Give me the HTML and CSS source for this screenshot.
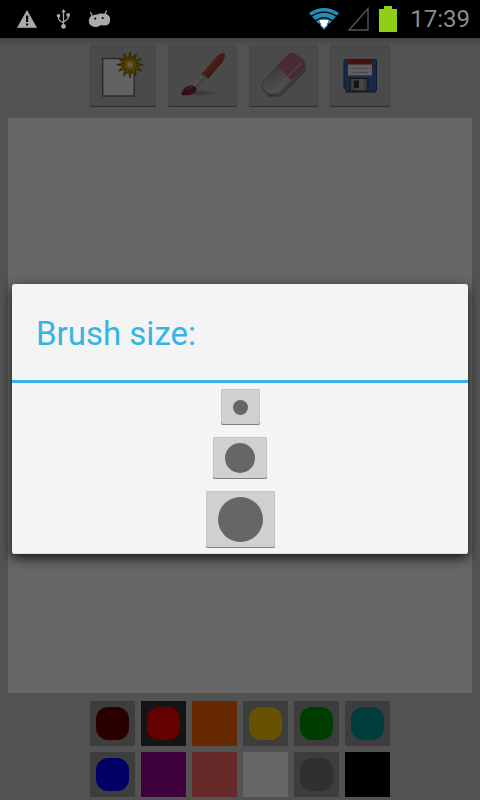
FILE: index.html
```
<!DOCTYPE html>
<html lang="en">
<head>
    <meta charset="UTF-8">
    <meta name="viewport" content="width=device-width, initial-scale=1.0">
    <title>Drawing</title>
    <link rel="stylesheet" href="styles.css">
</head>
<body>

    <header class="status-bar">
        <div class="status-left">
            <svg width="20" height="18" viewBox="0 0 20 18">
                <path d="M10 0.5L19.6 17.6H0.4Z" fill="#aaa" stroke="#aaa" stroke-width="0.6" stroke-linejoin="round"/>
                <path d="M9 5.5h2.2v6.5H9zM9 13.4h2.2v2.2H9z" fill="#000"/>
            </svg>
            <svg width="14" height="20" viewBox="0 0 14 20" fill="#aaa">
                <path d="M7.500 2v16M2.500 6v3q0 2 2 3l3 2M12.300 5v3q0 2-2 3l-2.800 2" fill="none" stroke="#aaa" stroke-width="1.300"/>
                <path d="M7.500 0L9.700 3.200H5.300Z"/>
                <circle cx="7.500" cy="17.400" r="2.400"/>
                <circle cx="2.500" cy="6.800" r="1.800"/>
                <path d="M10.500 4.300h3.400v3.200h-3.400z"/>
            </svg>
            <svg width="22" height="18" viewBox="0 0 22 18">
                <path d="M1.500 2.500l2 4M17.500 1l-2 4" stroke="#aaa" stroke-width="1.300" stroke-linecap="round"/>
                <path d="M0.500 8C3 4.500 7 5 10 3.800C14 2.800 19 3.500 20.800 7C22 12 20 15.500 15.500 15.500C13 15.500 12 15 11 15.500C8.500 17.700 3 17.500 1 14.500C-0.500 12.500-0.500 10 0.500 8Z" fill="#aaa"/>
                <circle cx="6.300" cy="8.600" r="1.100" fill="#000"/>
                <circle cx="13.700" cy="8" r="1.100" fill="#000"/>
            </svg>
        </div>
        <div class="status-right">
            <svg width="30" height="24" viewBox="0 0 30 24">
                <path d="M16 23L1 6Q16-4 31 6Z" fill="#268cb3"/>
                <path d="M3.500 9.200Q16 1 28.500 9.200M7.500 13.700Q16 7.500 24.500 13.700M11 17.500Q16 14 21 17.500" fill="none" stroke="#000" stroke-width="1.400"/>
                <path d="M11.500 13h9l-1.500 5-3 3-3-3z" fill="#fff"/>
            </svg>
            <svg width="21" height="24" viewBox="0 0 21 24">
                <path d="M20 1.500V23H1Z" fill="none" stroke="#555" stroke-width="1.400"/>
            </svg>
            <svg width="18" height="26" viewBox="0 0 18 26">
                <path d="M5 0h8v3h5v23H0V3h5z" fill="#8fcf16"/>
            </svg>
            <time class="clock">17:39</time>
        </div>
    </header>

    <main class="app">
        <div class="toolbar">
            <button class="tool" aria-label="New drawing">
                <svg width="66" height="62" viewBox="0 0 66 62">
                    <path d="M12.700 13.500h31.500v37.500H12.700z" fill="#f5f5f5" stroke="#6d6d6d" stroke-width="1.500"/>
                    <path d="M40 7.500l1.500 6.500 4.700-5-1.500 6.500 6.500-2-4.700 4.800 6.500 1.400-6.500 1.500 4.700 4.700-6.500-1.900 1.500 6.500-4.700-4.700-1.500 6.900-1.500-6.900-4.700 4.700 1.500-6.500-6.500 1.900 4.700-4.700-6.500-1.500 6.500-1.400-4.700-4.800 6.500 2-1.500-6.500 4.700 5z" fill="#c9a200" stroke="#856a08" stroke-width="1.200" stroke-linejoin="round"/>
                    <circle cx="40" cy="19.700" r="4.500" fill="#cfa620"/>
                    <circle cx="40" cy="19.700" r="2.800" fill="#ffe8a0"/>
                </svg>
            </button>
            <button class="tool" aria-label="Brush">
                <svg width="69" height="62" viewBox="0 0 69 62">
                    <defs>
                        <radialGradient id="brush-shadow">
                            <stop offset="0" stop-color="#666" stop-opacity="0.7"/>
                            <stop offset="1" stop-color="#666" stop-opacity="0"/>
                        </radialGradient>
                        <linearGradient id="handle" x1="0" y1="0" x2="1" y2="1">
                            <stop offset="0.300" stop-color="#c8604f"/>
                            <stop offset="0.700" stop-color="#903423"/>
                        </linearGradient>
                    </defs>
                    <ellipse cx="32" cy="48" rx="18" ry="3.500" fill="url(#brush-shadow)"/>
                    <path d="M33.500 29L40.500 33.500L54.500 17Q58 11.500 56.500 8.500Q54 6.500 49 11Z" fill="url(#handle)"/>
                    <path d="M33 29.500L38.500 33.500L28.500 44L24 40.500Z" fill="#a9a9a9"/>
                    <path d="M34 31L25.500 41" stroke="#ddd" stroke-width="1.400"/>
                    <path d="M13.500 50C13.500 44 19 40 24 40.500Q29 41.500 28.500 45C27 49.500 20 51 13.500 50Z" fill="#782530"/>
                    <path d="M18 45q3-3 6-3" stroke="#a4505a" stroke-width="1.500" fill="none"/>
                </svg>
            </button>
            <button class="tool" aria-label="Eraser">
                <svg width="69" height="62" viewBox="0 0 69 62">
                    <defs>
                        <linearGradient id="rubber" x1="0" y1="0" x2="0.600" y2="1">
                            <stop offset="0" stop-color="#858a88"/>
                            <stop offset="1" stop-color="#cdd0ce"/>
                        </linearGradient>
                    </defs>
                    <path d="M14 43L20 50.500H31L57 24" fill="none" stroke="#888" stroke-width="2.500"/>
                    <path d="M27.700 21.300L42.700 35.300L30.300 47.500Q28 49.500 24 49H20Q18 49 13 42.500Q12 39 14 36.500Z" fill="url(#rubber)"/>
                    <path d="M27.700 21.300L40 9Q42 7.500 45 8.500L54.500 15Q56.500 19 56 22L42.700 35.300Z" fill="#ba6b83"/>
                    <path d="M27.700 21.300L40 9Q42 7.500 45 8.500L54.500 15Q56.500 19 56 22L30.300 47.500Q28 49.500 24 49H20Q18 49 13 42.500Q12 39 14 36.500Z" fill="none" stroke="#777" stroke-width="0.800"/>
                    <path d="M53.500 16.500L24 46.500M14.500 39.500l5.500 7.500h4" fill="none" stroke="#d8cfd2" stroke-width="0.900"/>
                </svg>
            </button>
            <button class="tool" aria-label="Save">
                <svg width="60" height="62" viewBox="0 0 60 62">
                    <defs>
                        <linearGradient id="shutter">
                            <stop offset="0" stop-color="#8a8a8a"/>
                            <stop offset="0.700" stop-color="#b5b5b5"/>
                            <stop offset="1" stop-color="#666"/>
                        </linearGradient>
                    </defs>
                    <path d="M15 47h31" stroke="#777" stroke-width="2"/>
                    <path d="M15.500 14.500H45Q46.500 14.500 46.500 16V44.500Q46.500 46 45 46H17L14 43V16Q14 14.500 15.500 14.500Z" fill="#3f68aa" stroke="#1f3c70"/>
                    <path d="M18 15h24v15.500H18z" fill="#eee"/>
                    <path d="M18 14.500h24v5H18z" fill="#ad301f"/>
                    <path d="M22 23.500h16M22 27.500h16" stroke="#b5b5b5"/>
                    <path d="M20 33.500h18V46H20z" fill="url(#shutter)" stroke="#333"/>
                    <path d="M24 35.500h5v7.500h-5z" fill="#333"/>
                </svg>
            </button>
        </div>

        <div class="canvas"></div>

        <div class="palette">
            <button class="paint maroon" aria-label="Maroon"><span class="swatch"></span></button>
            <button class="paint red selected" aria-label="Red"><span class="swatch"></span></button>
            <button class="paint orange flat" aria-label="Orange"></button>
            <button class="paint yellow" aria-label="Yellow"><span class="swatch"></span></button>
            <button class="paint green" aria-label="Green"><span class="swatch"></span></button>
            <button class="paint teal" aria-label="Teal"><span class="swatch"></span></button>
            <button class="paint blue" aria-label="Blue"><span class="swatch"></span></button>
            <button class="paint purple flat" aria-label="Purple"></button>
            <button class="paint pink flat" aria-label="Pink"></button>
            <button class="paint white flat" aria-label="White"></button>
            <button class="paint grey" aria-label="Grey"><span class="swatch"></span></button>
            <button class="paint black flat" aria-label="Black"></button>
        </div>

        <div class="overlay">
            <div class="dialog" role="dialog" aria-labelledby="dialog-title">
                <h1 class="dialog-title" id="dialog-title">Brush size:</h1>
                <div class="sizes">
                    <button class="size-button" aria-label="Small brush"><span class="dot small"></span></button>
                    <button class="size-button" aria-label="Medium brush"><span class="dot medium"></span></button>
                    <button class="size-button" aria-label="Large brush"><span class="dot large"></span></button>
                </div>
            </div>
        </div>
    </main>

</body>
</html>
```
FILE: styles.css
```
* {
    box-sizing: border-box;
}

body {
    margin: 0;
    min-height: 100vh;
    display: flex;
    flex-direction: column;
    font-family: Roboto, sans-serif;
    background-color: #000;
}

button {
    border: none;
    padding: 0;
    cursor: pointer;
}

svg {
    display: block;
    overflow: visible;
}

/* Status bar */
.status-bar {
    display: flex;
    justify-content: space-between;
    align-items: center;
    height: 38px;
    padding: 0 10px 0 17px;
}

.status-left {
    display: flex;
    align-items: center;
    gap: 19px;
}

.status-right {
    display: flex;
    align-items: center;
    gap: 10px;
}

.clock {
    margin-left: 3px;
    font-size: 24px;
    line-height: 28px;
    color: #8c8c8c;
}

/* App */
.app {
    position: relative;
    flex: 1;
    display: flex;
    flex-direction: column;
    background: linear-gradient(#a8a8a8, #ccc 8px);
}

.toolbar {
    display: flex;
    justify-content: center;
    gap: 12px;
    padding: 7px 0 11px;
}

.tool {
    background-color: #b9b9b9;
    border-radius: 2px;
    box-shadow: inset 0 -1px #707070, inset 0 0 0 1px #b0b0b0;
}

.canvas {
    flex: 1;
    margin: 0 8px;
    background-color: #fff;
}

.palette {
    display: grid;
    grid-template-columns: repeat(6, 45px);
    gap: 6px;
    justify-content: center;
    padding: 8px 0 3px;
}

.paint {
    height: 45px;
    padding: 6px;
    background-color: #999;
}

.paint.selected {
    background-color: #333;
}

.paint.flat {
    background-color: currentColor;
}

.swatch {
    display: block;
    height: 33px;
    border-radius: 12px;
    background-color: currentColor;
}

.maroon { color: #660000; }
.red { color: #ff0000; }
.orange { color: #ff6600; }
.yellow { color: #ffcc00; }
.green { color: #009900; }
.teal { color: #009999; }
.blue { color: #0000ff; }
.purple { color: #990099; }
.pink { color: #ff6666; }
.white { color: #ffffff; }
.grey { color: #787878; }
.black { color: #000000; }

/* Dialog */
.overlay {
    position: absolute;
    inset: 0;
    display: flex;
    align-items: center;
    padding: 0 12px;
    background-color: rgba(0, 0, 0, 0.6);
}

.dialog {
    flex: 1;
    border-radius: 3px;
    background-color: #f4f4f4;
    box-shadow: inset 0 -1px #ddd, 0 4px 12px rgba(0, 0, 0, 0.8);
}

.dialog-title {
    margin: 0;
    padding: 4px 24px 0;
    border-bottom: 3px solid #33b5e5;
    font-size: 33px;
    font-weight: 400;
    line-height: 92px;
    color: #33b5e5;
}

.sizes {
    display: flex;
    flex-direction: column;
    align-items: center;
    gap: 12px;
    padding: 6px 0;
}

.size-button {
    display: flex;
    align-items: center;
    min-height: 36px;
    padding: 6px 12px;
    border-radius: 2px;
    background-color: #d0d0d0;
    box-shadow: inset 0 -1px #808080, inset 0 0 0 1px #c6c6c6;
}

.dot {
    border-radius: 50%;
    background-color: #666;
}

.small {
    width: 15px;
    height: 15px;
}

.medium {
    width: 30px;
    height: 30px;
}

.large {
    width: 45px;
    height: 45px;
}
```
